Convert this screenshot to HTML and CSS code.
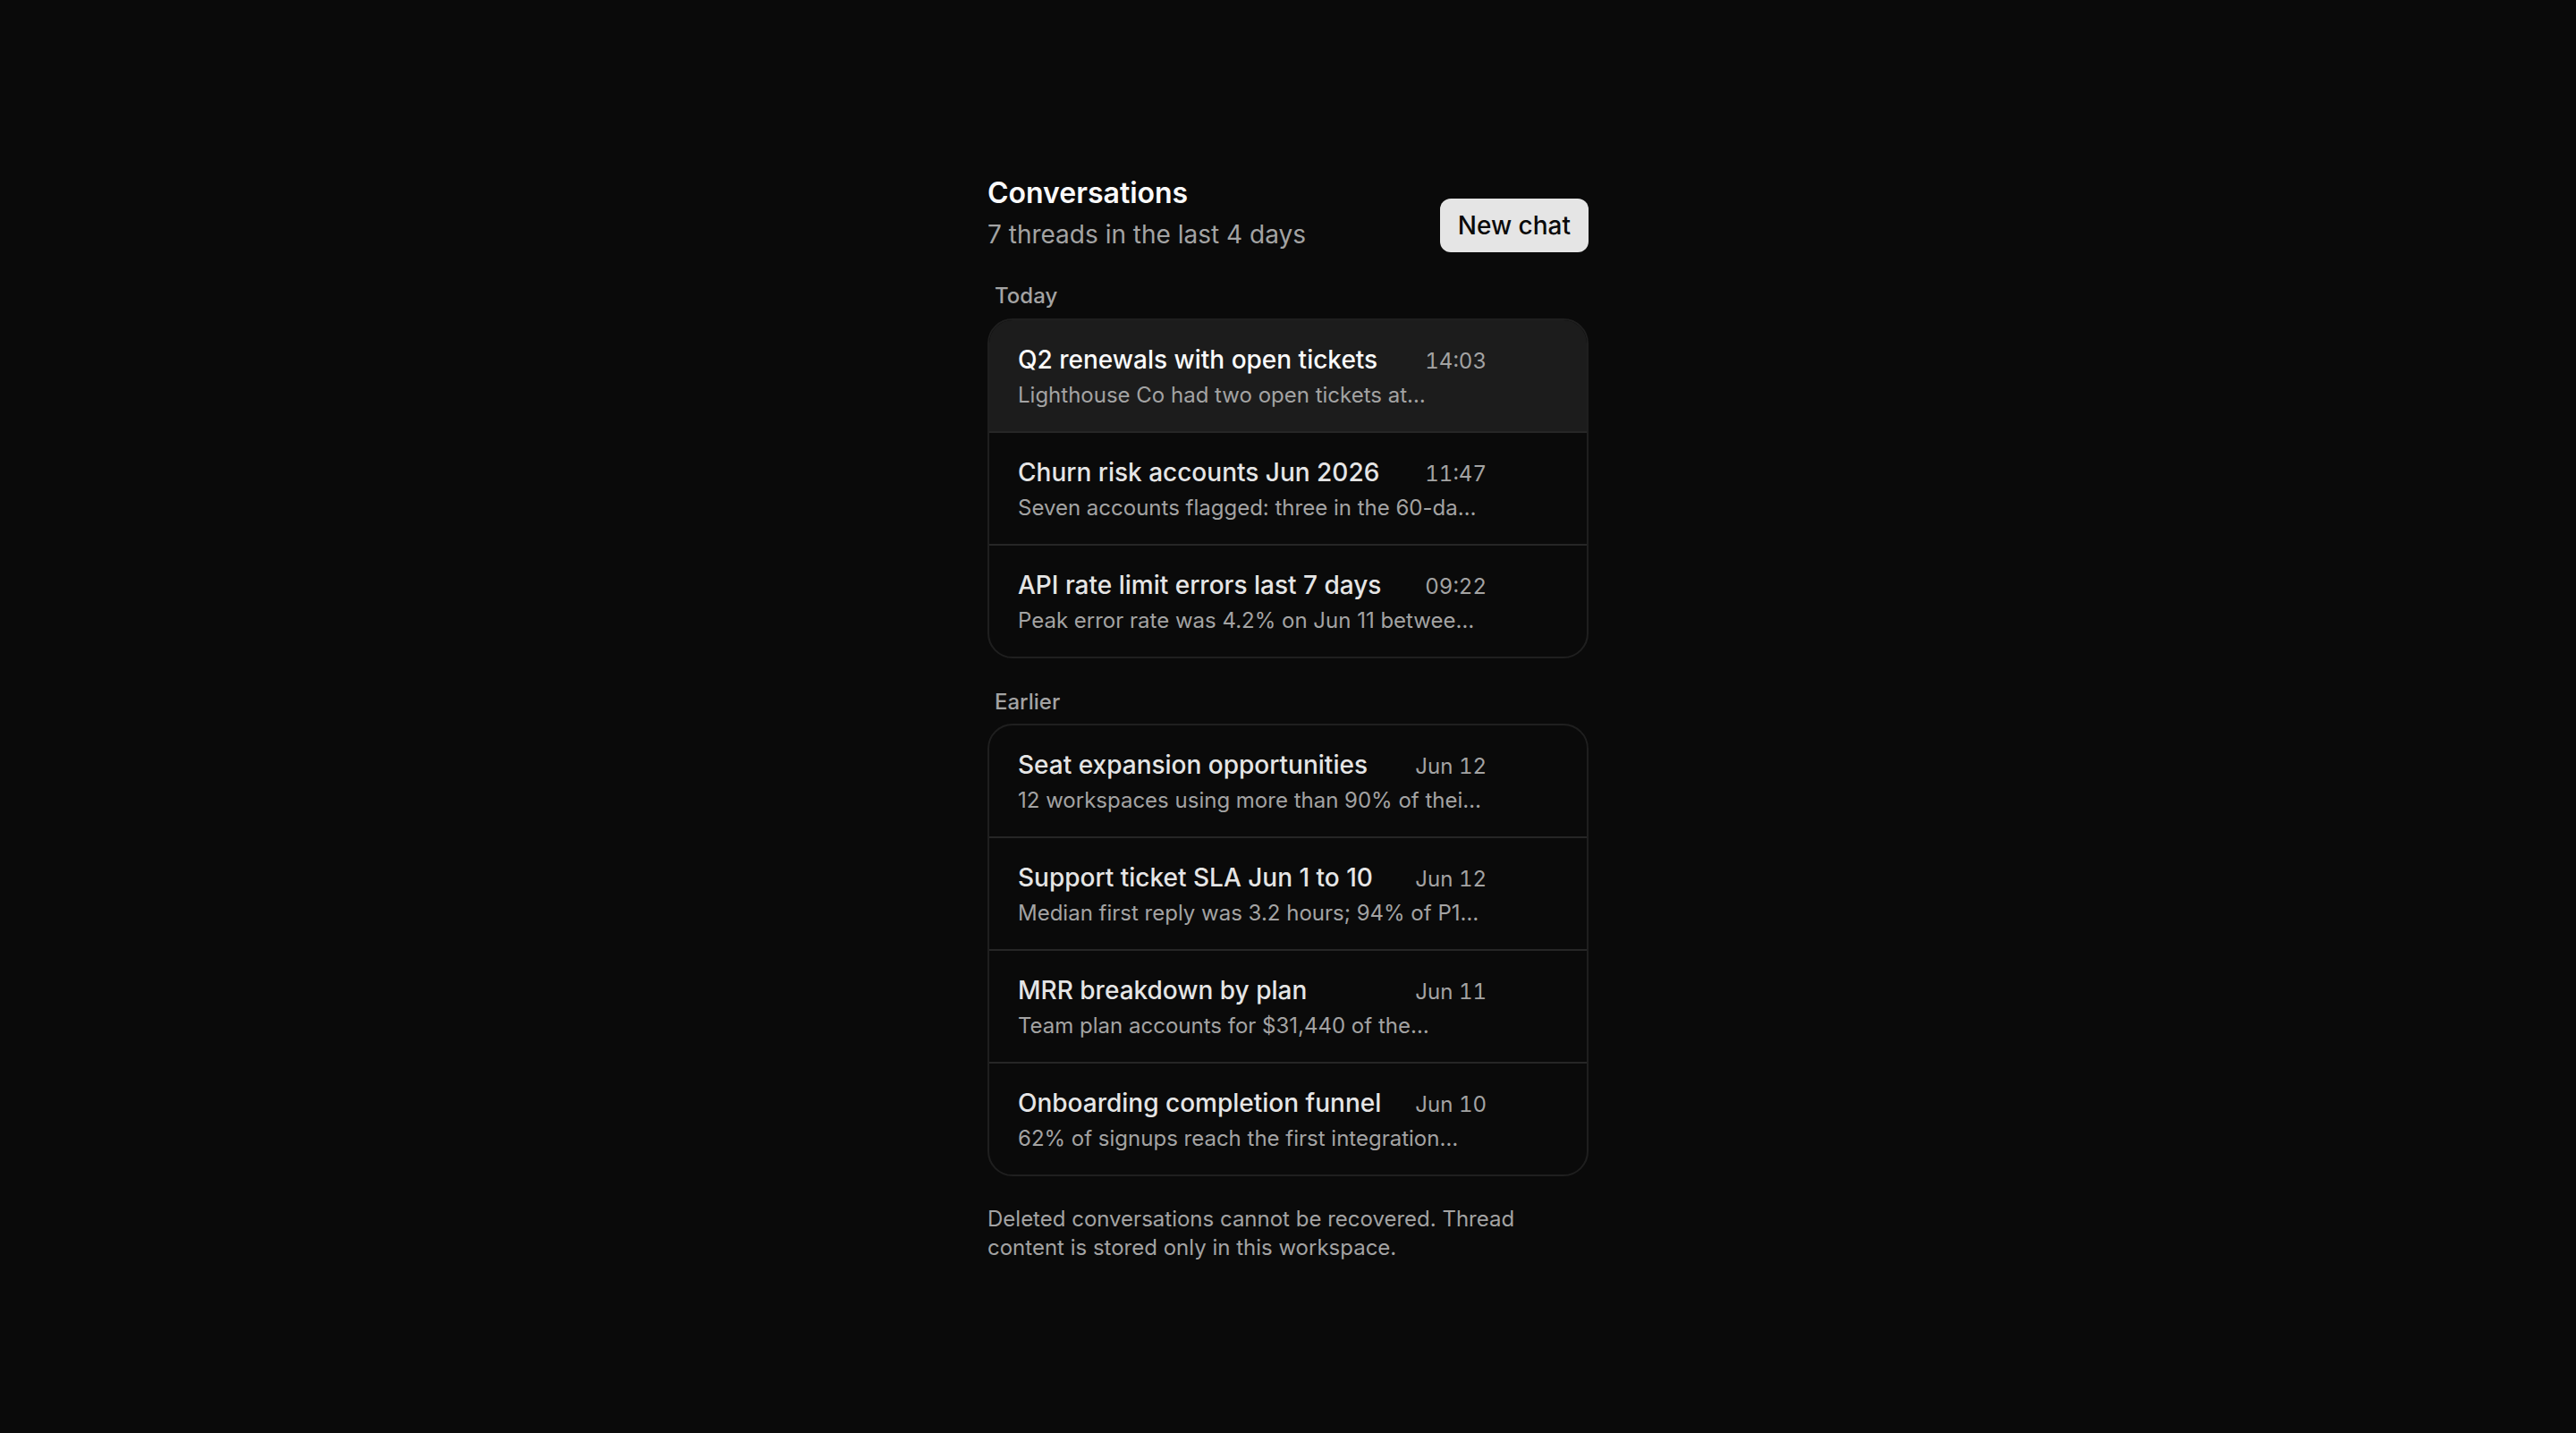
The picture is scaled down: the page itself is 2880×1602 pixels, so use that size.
FILE: index.html
```html
<!DOCTYPE html>
<html>
	<head>
		<title>Conversations</title>
		<meta name="viewport" content="width=device-width, initial-scale=1">
		<link rel="stylesheet" href="styles.css">
	</head>
	<body>
	<main class="panel">
		<header class="panel-head">
			<div>
				<h1 class="panel-title">Conversations</h1>
				<p class="panel-sub">7 threads in the last 4 days</p>
			</div>
			<button class="new-chat" type="button">New chat</button>
		</header>

		<section class="group">
			<h2 class="group-label">Today</h2>
			<ul class="threads">
				<li class="thread active">
					<div class="thread-top">
						<span class="thread-title">Q2 renewals with open tickets</span>
						<span class="thread-time">14:03</span>
					</div>
					<p class="thread-preview">Lighthouse Co had two open tickets at…</p>
				</li>
				<li class="thread">
					<div class="thread-top">
						<span class="thread-title">Churn risk accounts Jun 2026</span>
						<span class="thread-time">11:47</span>
					</div>
					<p class="thread-preview">Seven accounts flagged: three in the 60-da…</p>
				</li>
				<li class="thread">
					<div class="thread-top">
						<span class="thread-title">API rate limit errors last 7 days</span>
						<span class="thread-time">09:22</span>
					</div>
					<p class="thread-preview">Peak error rate was 4.2% on Jun 11 betwee…</p>
				</li>
			</ul>
		</section>

		<section class="group">
			<h2 class="group-label">Earlier</h2>
			<ul class="threads">
				<li class="thread">
					<div class="thread-top">
						<span class="thread-title">Seat expansion opportunities</span>
						<span class="thread-time">Jun 12</span>
					</div>
					<p class="thread-preview">12 workspaces using more than 90% of thei…</p>
				</li>
				<li class="thread">
					<div class="thread-top">
						<span class="thread-title">Support ticket SLA Jun 1 to 10</span>
						<span class="thread-time">Jun 12</span>
					</div>
					<p class="thread-preview">Median first reply was 3.2 hours; 94% of P1…</p>
				</li>
				<li class="thread">
					<div class="thread-top">
						<span class="thread-title">MRR breakdown by plan</span>
						<span class="thread-time">Jun 11</span>
					</div>
					<p class="thread-preview">Team plan accounts for $31,440 of the…</p>
				</li>
				<li class="thread">
					<div class="thread-top">
						<span class="thread-title">Onboarding completion funnel</span>
						<span class="thread-time">Jun 10</span>
					</div>
					<p class="thread-preview">62% of signups reach the first integration…</p>
				</li>
			</ul>
		</section>

		<p class="note">Deleted conversations cannot be recovered. Thread content is stored only in this workspace.</p>
	</main>
	</body>
</html>
```

FILE: styles.css
```css
body{
	margin:0;
	background-color:#0a0a0a;
	color:#fafafa;
	font-family:Inter, "Noto Sans", sans-serif;
}
.panel{
	width:672px;
	margin:0 auto;
	padding:192px 0;
}
.panel-head{
	display:flex;
	justify-content:space-between;
	align-items:flex-end;
	margin-bottom:32px;
}
.panel-title{
	margin:0;
	font-size:32px;
	line-height:48px;
	font-weight:600;
	color:#fafafa;
}
.panel-sub{
	margin:2px 0 0;
	font-size:28px;
	line-height:40px;
	color:#a3a3a3;
}
.new-chat{
	font-family:inherit;
	font-size:28px;
	line-height:40px;
	font-weight:500;
	color:#0a0a0a;
	background:#e5e5e5;
	border:none;
	border-radius:12px;
	padding:10px 20px;
	cursor:pointer;
}
.group{
	margin-bottom:32px;
}
.group-label{
	margin:0 0 8px;
	padding:0 8px;
	font-size:24px;
	line-height:1.4;
	font-weight:500;
	color:#a3a3a3;
}
.threads{
	list-style:none;
	margin:0;
	padding:0;
	border:2px solid #1f1f1f;
	border-radius:28px;
	overflow:hidden;
}
.thread{
	padding:24px 112px 24px 32px;
	border-top:2px solid #262626;
	cursor:pointer;
}
.thread:first-child{
	border-top:none;
}
.thread.active{
	background:#1c1c1c;
}
.thread-top{
	display:flex;
	align-items:baseline;
	justify-content:space-between;
	gap:24px;
}
.thread-title{
	font-size:28px;
	line-height:40px;
	font-weight:500;
	color:#e5e5e5;
	white-space:nowrap;
	overflow:hidden;
	text-overflow:ellipsis;
}
.thread.active .thread-title{
	color:#fafafa;
}
.thread-time{
	flex-shrink:0;
	font-size:24px;
	font-variant-numeric:tabular-nums;
	color:#a3a3a3;
}
.thread-preview{
	margin:4px 0 0;
	font-size:24px;
	line-height:32px;
	color:#a3a3a3;
	white-space:nowrap;
	overflow:hidden;
	text-overflow:ellipsis;
}
.note{
	margin:0;
	font-size:24px;
	line-height:32px;
	color:#a3a3a3;
}
```
